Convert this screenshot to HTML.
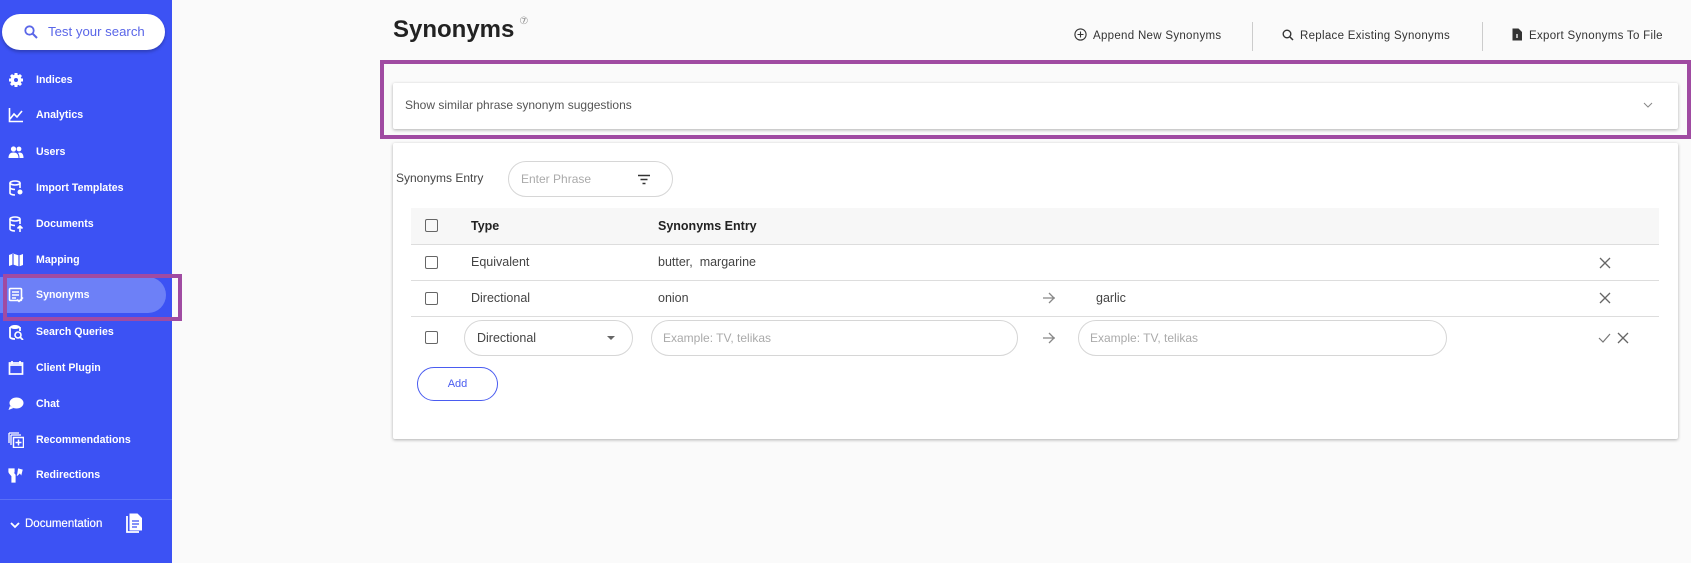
<!DOCTYPE html>
<html><head><meta charset="utf-8"><style>
*{box-sizing:border-box;margin:0;padding:0}
body{width:1691px;height:563px;overflow:hidden;background:#fafafa;font-family:"Liberation Sans",sans-serif;position:relative;color:#333}
.sb{position:absolute;left:0;top:0;width:172px;height:563px;background:#3c52f4}
.search{position:absolute;left:2px;top:14px;width:163px;height:36px;background:#fff;border-radius:18px;box-shadow:0 2px 3px rgba(0,0,0,.25);color:#5a66e8;font-size:13.2px;line-height:36px;padding-left:46px}
.search svg{position:absolute;left:22px;top:11px}
.nav{position:absolute;left:0;width:172px;height:24px;color:#fff;font-size:10.6px;font-weight:bold;line-height:24px;padding-left:36px}
.nav svg{position:absolute;left:8px;top:4px}
.act{position:absolute;left:0;top:277px;width:166px;height:36px;background:#6d80f7;border-radius:0 18px 18px 0}
.purp{position:absolute;border:4px solid #a04ba2}
.abs{position:absolute}
.h1{left:393px;top:16px;font-size:24px;font-weight:bold;color:#222}
.ha{top:28px;font-size:11.5px;color:#333;letter-spacing:.3px}
.sep{top:22px;width:1px;height:29px;background:#ccc}
.card{background:#fff;box-shadow:0 1px 3px rgba(0,0,0,.3);border-radius:2px}
.t{font-size:12.5px;color:#444}
.cb{position:absolute;left:425px;width:13px;height:13px;border:1.6px solid #666;border-radius:2px}
.line{position:absolute;left:411px;width:1248px;height:1px;background:#ddd}
.pill{position:absolute;border:1px solid #d6d6d6;border-radius:18px;background:#fff;font-size:12px;color:#aaa}
</style></head><body>
<div class="sb">
 <div class="search"><svg width="14" height="14" viewBox="0 0 14 14"><circle cx="5.5" cy="5.5" r="4.2" fill="none" stroke="#5a66e8" stroke-width="1.8"/><path d="M8.5 8.5L13 13" stroke="#5a66e8" stroke-width="2"/></svg>Test your search</div>
 <div class="act"></div>
 <div class="nav" style="top:68px"><svg width="16" height="16" viewBox="0 0 16 16"><circle cx="8" cy="8" r="5.5" fill="#fff"/><path d="M8 1v14M1 8h14M3 3l10 10M13 3L3 13" stroke="#fff" stroke-width="3"/><circle cx="8" cy="8" r="2" fill="#3c52f4"/></svg>Indices</div>
 <div class="nav" style="top:103px"><svg width="16" height="16" viewBox="0 0 16 16"><path d="M1.5 1v13.5H15M2 12l4-5 3 3 5-6" stroke="#fff" stroke-width="1.6" fill="none"/></svg>Analytics</div>
 <div class="nav" style="top:140px"><svg width="16" height="16" viewBox="0 0 16 16"><circle cx="5.5" cy="5" r="2.6" fill="#fff"/><circle cx="11" cy="5" r="2.4" fill="#fff"/><path d="M0.5 14c0-4 2-5.5 5-5.5s5 1.5 5 5.5zM11 8.5c3 0 4.5 1.5 4.5 5.5h-4c0-2-.5-4-1.5-5z" fill="#fff"/></svg>Users</div>
 <div class="nav" style="top:176px"><svg width="16" height="16" viewBox="0 0 16 16"><ellipse cx="7" cy="3" rx="5" ry="2" fill="none" stroke="#fff" stroke-width="1.6"/><path d="M2 3v10c0 1 2 2 5 2M12 3v5M2 7.5c0 1 2 2 5 2" stroke="#fff" stroke-width="1.6" fill="none"/><circle cx="12" cy="12" r="2.5" fill="#fff"/></svg>Import Templates</div>
 <div class="nav" style="top:212px"><svg width="16" height="16" viewBox="0 0 16 16"><ellipse cx="7" cy="3" rx="5" ry="2" fill="none" stroke="#fff" stroke-width="1.6"/><path d="M2 3v10c0 1 2 2 5 2M12 3v5M2 7.5c0 1 2 2 5 2M12 16v-6M9.5 12.5l2.5-2.5 2.5 2.5" stroke="#fff" stroke-width="1.6" fill="none"/></svg>Documents</div>
 <div class="nav" style="top:248px"><svg width="16" height="16" viewBox="0 0 16 16"><path d="M1 3l4-1.5 6 2 4-1.5v11l-4 1.5-6-2-4 1.5z" fill="#fff"/><path d="M5 2v11M11 3.5v11" stroke="#3c52f4" stroke-width="1.2"/></svg>Mapping</div>
 <div class="nav" style="top:283px"><svg width="16" height="16" viewBox="0 0 16 16"><rect x="1.5" y="1.5" width="12" height="12" rx="1" fill="none" stroke="#fff" stroke-width="1.6"/><path d="M4 5h7M4 8h7M4 11h4M9 12.5l2 2 4-4" stroke="#fff" stroke-width="1.5" fill="none"/></svg>Synonyms</div>
 <div class="nav" style="top:320px"><svg width="16" height="16" viewBox="0 0 16 16"><ellipse cx="7" cy="3" rx="5" ry="2" fill="#fff"/><path d="M2 3v10c0 1 2 2 5 2M12 3v4" stroke="#fff" stroke-width="1.8" fill="none"/><circle cx="10" cy="11" r="3" fill="#3c52f4" stroke="#fff" stroke-width="1.6"/><path d="M12 13l3 3" stroke="#fff" stroke-width="1.8"/></svg>Search Queries</div>
 <div class="nav" style="top:356px"><svg width="16" height="16" viewBox="0 0 16 16"><rect x="1.5" y="3" width="13" height="11" fill="none" stroke="#fff" stroke-width="1.7"/><path d="M1.5 5h13M4 1v3M12 1v3" stroke="#fff" stroke-width="1.7"/></svg>Client Plugin</div>
 <div class="nav" style="top:392px"><svg width="16" height="16" viewBox="0 0 16 16"><ellipse cx="8.5" cy="7" rx="7" ry="5.5" fill="#fff"/><path d="M2 10l-1.5 4 5-2z" fill="#fff"/></svg>Chat</div>
 <div class="nav" style="top:428px"><svg width="16" height="16" viewBox="0 0 16 16"><path d="M1 1v10M1 1h10M3 3v10M3 3h10" stroke="#fff" stroke-width="1.3" fill="none"/><rect x="5.5" y="5.5" width="10" height="10" fill="none" stroke="#fff" stroke-width="1.5"/><path d="M10.5 7.5v6M7.5 10.5h6" stroke="#fff" stroke-width="1.5"/></svg>Recommendations</div>
 <div class="nav" style="top:463px"><svg width="16" height="16" viewBox="0 0 16 16"><path d="M1 2h5v3H4.5L7 8v7H4V9L1.5 6V5H1zM10 2l4 1-1 4-1-1.5-3 3" fill="#fff" stroke="#fff" stroke-width="1.2"/></svg>Redirections</div>
 <div class="abs" style="left:0;top:499px;width:172px;height:1px;background:#5a6ff6"></div>
 <div class="nav" style="top:512px;padding-left:25px;font-weight:normal;font-size:11.5px;text-shadow:0 0 .5px #fff"><svg width="12" height="12" viewBox="0 0 12 12" style="left:9px;top:7px"><path d="M2 4l4 4 4-4" stroke="#fff" stroke-width="1.8" fill="none"/></svg>Documentation</div>
 <svg class="abs" style="left:126px;top:513px" width="17" height="20" viewBox="0 0 17 20"><path d="M1 3v16h12" stroke="#fff" stroke-width="1.8" fill="none"/><path d="M3.5 0.5h8l4.5 4.5v12.5h-12.5z" fill="#fff"/><path d="M6 8h7M6 11h7M6 14h5" stroke="#3c52f4" stroke-width="1.3"/></svg>
</div>
<div class="purp" style="left:3px;top:274px;width:179px;height:47px"></div>

<div class="abs h1">Synonyms<span style="font-size:10px;font-weight:normal;color:#888;vertical-align:top;margin-left:5px">⑦</span></div>
<div class="abs ha" style="left:1074px"><svg width="13" height="13" viewBox="0 0 13 13" style="vertical-align:-2px;margin-right:6px"><circle cx="6.5" cy="6.5" r="5.6" fill="none" stroke="#333" stroke-width="1.1"/><path d="M6.5 3.5v6M3.5 6.5h6" stroke="#333" stroke-width="1.1"/></svg>Append New Synonyms</div>
<div class="abs sep" style="left:1252px"></div>
<div class="abs ha" style="left:1281px"><svg width="13" height="13" viewBox="0 0 13 13" style="vertical-align:-2px;margin-right:6px"><circle cx="6" cy="6" r="3.8" fill="none" stroke="#333" stroke-width="1.4"/><path d="M9 9l3 3" stroke="#333" stroke-width="1.5"/></svg>Replace Existing Synonyms</div>
<div class="abs sep" style="left:1482px"></div>
<div class="abs ha" style="left:1511px"><svg width="12" height="13" viewBox="0 0 12 13" style="vertical-align:-2px;margin-right:6px"><path d="M1.5 0.5h6l3.5 3.5v8.5h-9.5z" fill="#333"/><path d="M6 6v4" stroke="#fff" stroke-width="1.3"/></svg>Export Synonyms To File</div>

<div class="purp" style="left:380px;top:60px;width:1311px;height:79px"></div>
<div class="abs card" style="left:393px;top:83px;width:1285px;height:46px"><div class="abs t" style="left:12px;top:15px;font-size:12px;color:#555">Show similar phrase synonym suggestions</div><svg class="abs" style="left:1250px;top:18px" width="10" height="8" viewBox="0 0 10 8"><path d="M1 2l4 4 4-4" stroke="#888" stroke-width="1" fill="none"/></svg></div>

<div class="abs card" style="left:393px;top:143px;width:1285px;height:296px"></div>
<div class="abs t" style="left:396px;top:171px;color:#444;font-size:12px">Synonyms Entry</div>
<div class="pill" style="left:508px;top:161px;width:165px;height:36px;line-height:34px;padding-left:12px">Enter Phrase<svg class="abs" style="left:128px;top:12px" width="14" height="11" viewBox="0 0 14 11"><path d="M1 1.5h12M3.5 5.5h7M5.5 9.5h3" stroke="#333" stroke-width="1.6"/></svg></div>

<div class="abs" style="left:411px;top:208px;width:1248px;height:36px;background:#f7f7f7"></div>
<div class="line" style="top:244px"></div>
<div class="line" style="top:280px"></div>
<div class="line" style="top:316px"></div>
<div class="cb" style="top:219px"></div>
<div class="cb" style="top:256px"></div>
<div class="cb" style="top:292px"></div>
<div class="cb" style="top:331px"></div>
<div class="abs t" style="left:471px;top:219px;font-weight:bold;color:#222">Type</div>
<div class="abs t" style="left:658px;top:219px;font-weight:bold;color:#222">Synonyms Entry</div>
<div class="abs t" style="left:471px;top:255px">Equivalent</div>
<div class="abs t" style="left:658px;top:255px">butter,&nbsp; margarine</div>
<div class="abs t" style="left:471px;top:291px">Directional</div>
<div class="abs t" style="left:658px;top:291px">onion</div>
<div class="abs t" style="left:1096px;top:291px">garlic</div>
<svg class="abs" style="left:1042px;top:292px" width="14" height="12" viewBox="0 0 14 12"><path d="M1 6h12M7 1l5 5-5 5" stroke="#888" stroke-width="1.3" fill="none"/></svg>
<svg class="abs" style="left:1042px;top:332px" width="14" height="12" viewBox="0 0 14 12"><path d="M1 6h12M7 1l5 5-5 5" stroke="#888" stroke-width="1.3" fill="none"/></svg>
<svg class="abs" style="left:1599px;top:257px" width="12" height="12" viewBox="0 0 12 12"><path d="M1 1l10 10M11 1L1 11" stroke="#666" stroke-width="1.3"/></svg>
<svg class="abs" style="left:1599px;top:292px" width="12" height="12" viewBox="0 0 12 12"><path d="M1 1l10 10M11 1L1 11" stroke="#666" stroke-width="1.3"/></svg>
<svg class="abs" style="left:1598px;top:333px" width="13" height="10" viewBox="0 0 13 10"><path d="M1 5l4 4 7-8" stroke="#777" stroke-width="1.2" fill="none"/></svg>
<svg class="abs" style="left:1617px;top:332px" width="12" height="12" viewBox="0 0 12 12"><path d="M1 1l10 10M11 1L1 11" stroke="#666" stroke-width="1.3"/></svg>

<div class="pill" style="left:464px;top:320px;width:169px;height:36px;line-height:34px;padding-left:12px;color:#444;font-size:12.5px">Directional<svg class="abs" style="left:142px;top:15px" width="8" height="5" viewBox="0 0 8 5"><path d="M0 0h8L4 4z" fill="#666"/></svg></div>
<div class="pill" style="left:651px;top:320px;width:367px;height:36px;line-height:34px;padding-left:11px">Example: TV, telikas</div>
<div class="pill" style="left:1078px;top:320px;width:369px;height:36px;line-height:34px;padding-left:11px">Example: TV, telikas</div>
<div class="abs" style="left:417px;top:367px;width:81px;height:34px;border:1px solid #4a5cf0;border-radius:17px;color:#4a5cf0;font-size:11px;text-align:center;line-height:32px">Add</div>
</body></html>
